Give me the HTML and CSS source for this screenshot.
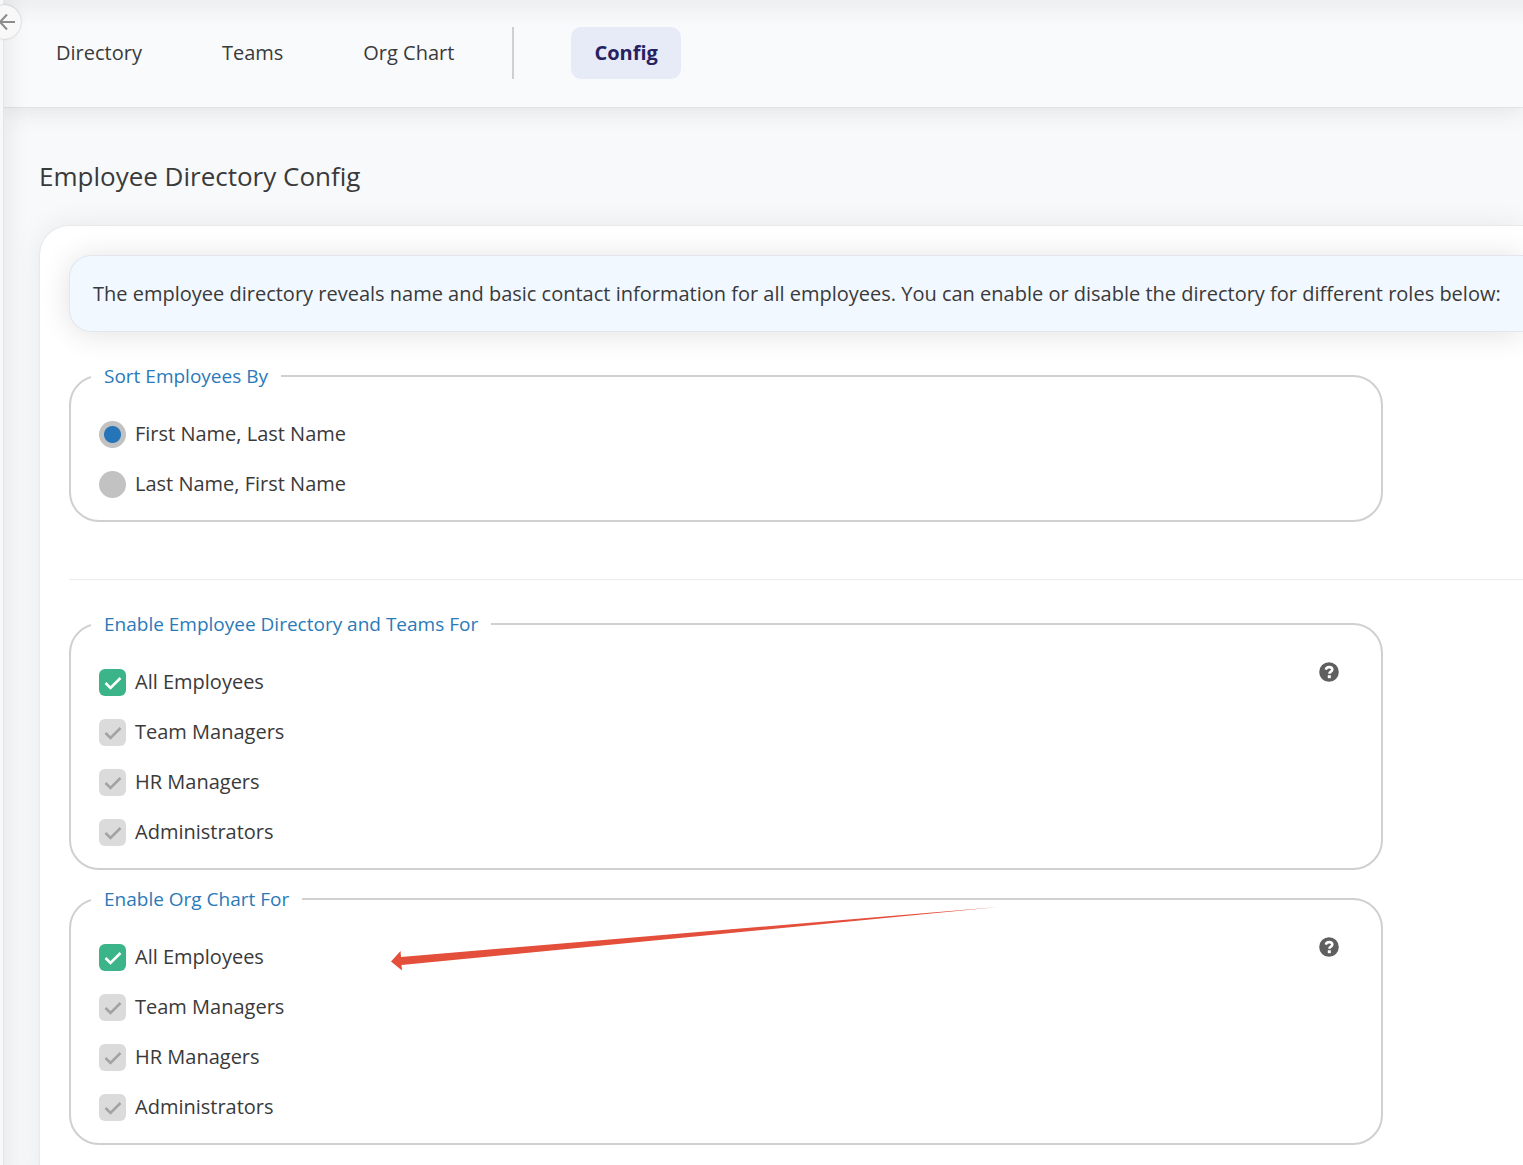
FILE: index.html
```html
<!DOCTYPE html>
<html lang="en">
<head>
  <meta charset="UTF-8">
  <title>Employee Directory Config</title>
  <meta name="viewport" content="width=device-width, initial-scale=1">
  <link rel="stylesheet" href="styles.css">
</head>
<body>
  <div class="layout">
    <div class="sidebar">
      <button class="collapse-btn" type="button" aria-label="Collapse menu">
        <svg width="34" height="34" viewBox="0 0 34 34" fill="none" stroke="#8c8c8c" stroke-width="2">
          <path d="M28 17H13M20 9.500l-7 7.500 7 7.500"/>
        </svg>
      </button>
    </div>
    <div class="main">
      <nav class="topbar">
        <a class="tab" href="#directory">Directory</a>
        <a class="tab" href="#teams">Teams</a>
        <a class="tab" href="#org-chart">Org Chart</a>
        <span class="divider"></span>
        <a class="tab active" href="#config">Config</a>
      </nav>
      <div class="content">
        <h1>Employee Directory Config</h1>
        <form class="card">
          <div class="banner">The employee directory reveals name and basic contact information for all employees. You can enable or disable the directory for different roles below:</div>

          <fieldset class="group">
            <legend>Sort Employees By</legend>
            <label class="option"><input type="radio" name="sort" checked>First Name, Last Name</label>
            <label class="option"><input type="radio" name="sort">Last Name, First Name</label>
          </fieldset>

          <hr>

          <fieldset class="group">
            <legend>Enable Employee Directory and Teams For</legend>
            <div class="group-body">
              <div class="options">
                <label class="option"><input type="checkbox" checked>All Employees</label>
                <label class="option"><input type="checkbox" checked disabled>Team Managers</label>
                <label class="option"><input type="checkbox" checked disabled>HR Managers</label>
                <label class="option"><input type="checkbox" checked disabled>Administrators</label>
              </div>
              <button class="help-btn" type="button" aria-label="Help">
                <svg width="20" height="20" viewBox="0 0 20 20">
                  <circle cx="10" cy="10" r="9.800" fill="#5f5f5f"/>
                  <path d="M6.800 7.600C7.200 5.900 8.400 5.100 10.100 5.100c1.900 0 3.200 1 3.200 2.500 0 2.100-2.900 2-2.900 4.100" fill="none" stroke="#fff" stroke-width="2.600"/>
                  <rect x="8.800" y="13.200" width="3" height="3" fill="#fff"/>
                </svg>
              </button>
            </div>
          </fieldset>

          <fieldset class="group">
            <legend>Enable Org Chart For</legend>
            <div class="group-body">
              <div class="options">
                <label class="option"><input type="checkbox" checked>All Employees</label>
                <label class="option"><input type="checkbox" checked disabled>Team Managers</label>
                <label class="option"><input type="checkbox" checked disabled>HR Managers</label>
                <label class="option"><input type="checkbox" checked disabled>Administrators</label>
              </div>
              <button class="help-btn" type="button" aria-label="Help">
                <svg width="20" height="20" viewBox="0 0 20 20">
                  <circle cx="10" cy="10" r="9.800" fill="#5f5f5f"/>
                  <path d="M6.800 7.600C7.200 5.900 8.400 5.100 10.100 5.100c1.900 0 3.200 1 3.200 2.500 0 2.100-2.900 2-2.900 4.100" fill="none" stroke="#fff" stroke-width="2.600"/>
                  <rect x="8.800" y="13.200" width="3" height="3" fill="#fff"/>
                </svg>
              </button>
              <!-- pointer to the "All Employees" option -->
              <svg class="pointer" width="608" height="64" viewBox="0 0 608 64">
                <path d="M0 54.500L9.500 44l.5 6L607 0 10.500 58l.5 5.500z" fill="#e34f3a"/>
              </svg>
            </div>
          </fieldset>
        </form>
      </div>
    </div>
  </div>
</body>
</html>
```
FILE: styles.css
```css
* {
  box-sizing: border-box;
}
body {
  font-family: "Open Sans", "Noto Sans", sans-serif;
  font-size: 20px;
  line-height: 28px;
  color: #3a3a3a;
  background: #f8f9fb;
  margin: 0;
  overflow-x: hidden;
}
.layout {
  display: flex;
  min-height: 100vh;
}
.sidebar {
  position: relative;
  flex: 0 0 4px;
  background: #f8f8f8;
  border-right: 1px solid #e4e5e6;
  box-shadow: 0 0 20px 6px rgba(0,0,0,0.08);
  z-index: 2;
}
.collapse-btn {
  position: absolute;
  left: -13px;
  top: 5px;
  width: 34px;
  height: 34px;
  padding: 0;
  border: none;
  border-radius: 50%;
  background: #f8f8f8;
  box-shadow: 0 0 2px rgba(0,0,0,0.25);
  cursor: pointer;
}
.collapse-btn svg {
  display: block;
}
.main {
  flex: 1;
  min-width: 0;
}
.topbar {
  display: flex;
  align-items: center;
  gap: 34px;
  height: 108px;
  padding: 0 29px 2px;
  background: linear-gradient(#eeeff1, #f9fafc 26px);
  border-bottom: 1px solid #e2e3e5;
  box-shadow: 0 2px 24px rgba(0,0,0,0.1);
}
.tab {
  padding: 12px 23px;
  border-radius: 10px;
  color: #3a3a3a;
  text-decoration: none;
  white-space: nowrap;
}
.tab.active {
  background: #e7eaf7;
  color: #262262;
  font-weight: bold;
}
.divider {
  width: 2px;
  height: 52px;
  margin: 0 23px 0 1px;
  background: #d0d0d0;
}
.content {
  padding: 49px 0 0 35px;
}
h1 {
  margin: 0 0 30px;
  font-size: 26px;
  line-height: 38px;
  font-weight: normal;
}
.card {
  min-height: 960px;
  padding: 29px 0 20px 29px;
  background: #fff;
  border: 1px solid #e8e9ea;
  border-right: none;
  border-radius: 30px 0 0 0;
  box-shadow: 0 0 30px rgba(0,0,0,0.07);
}
.banner {
  margin-bottom: 30px;
  padding: 24px 23px 23px;
  border: 1px solid #e3e6ec;
  border-right: none;
  border-radius: 22px 0 0 22px;
  background: #f1f8ff;
  box-shadow: 0 2px 30px rgba(0,0,0,0.12);
  white-space: nowrap;
}
.group {
  min-width: 0;
  margin: 0 140px 15px 0;
  padding: 19px 28px 11px 20px;
  border: 2px solid #d0d0d0;
  border-radius: 30px;
}
.group legend {
  padding: 0 13px;
  font-size: 19px;
  color: #2a7ab9;
}
.group-body {
  position: relative;
  display: flex;
  justify-content: space-between;
  align-items: flex-start;
}
.option {
  display: flex;
  align-items: center;
  gap: 9px;
  height: 50px;
  margin-left: 8px;
}
.option input {
  appearance: none;
  flex: none;
  width: 27px;
  height: 27px;
  margin: 0;
}
.option input[type="radio"] {
  border-radius: 50%;
  background: #c2c2c2;
}
.option input[type="radio"]:checked {
  background: radial-gradient(circle, #2675b8 8px, #c2c2c2 9px);
}
.option input[type="checkbox"] {
  border-radius: 6px;
  background: #3bb48a url("data:image/svg+xml,%3Csvg xmlns='http://www.w3.org/2000/svg' viewBox='0 0 27 27'%3E%3Cpath d='M6.500 14l5 5L21.500 9' fill='none' stroke='%23fff' stroke-width='2.500'/%3E%3C/svg%3E");
}
.option input[type="checkbox"]:disabled {
  background: #dbdbdb url("data:image/svg+xml,%3Csvg xmlns='http://www.w3.org/2000/svg' viewBox='0 0 27 27'%3E%3Cpath d='M6.500 14l5 5L21.500 9' fill='none' stroke='%23a3a3a3' stroke-width='2.500'/%3E%3C/svg%3E");
}
.help-btn {
  margin: 5px 14px 0 0;
  padding: 0;
  border: none;
  background: none;
  cursor: pointer;
}
.help-btn svg {
  display: block;
}
.pointer {
  position: absolute;
  left: 300px;
  top: -25px;
  pointer-events: none;
}
hr {
  margin: 57px 0 30px;
  border: none;
  border-top: 1px solid #ececec;
}
```
